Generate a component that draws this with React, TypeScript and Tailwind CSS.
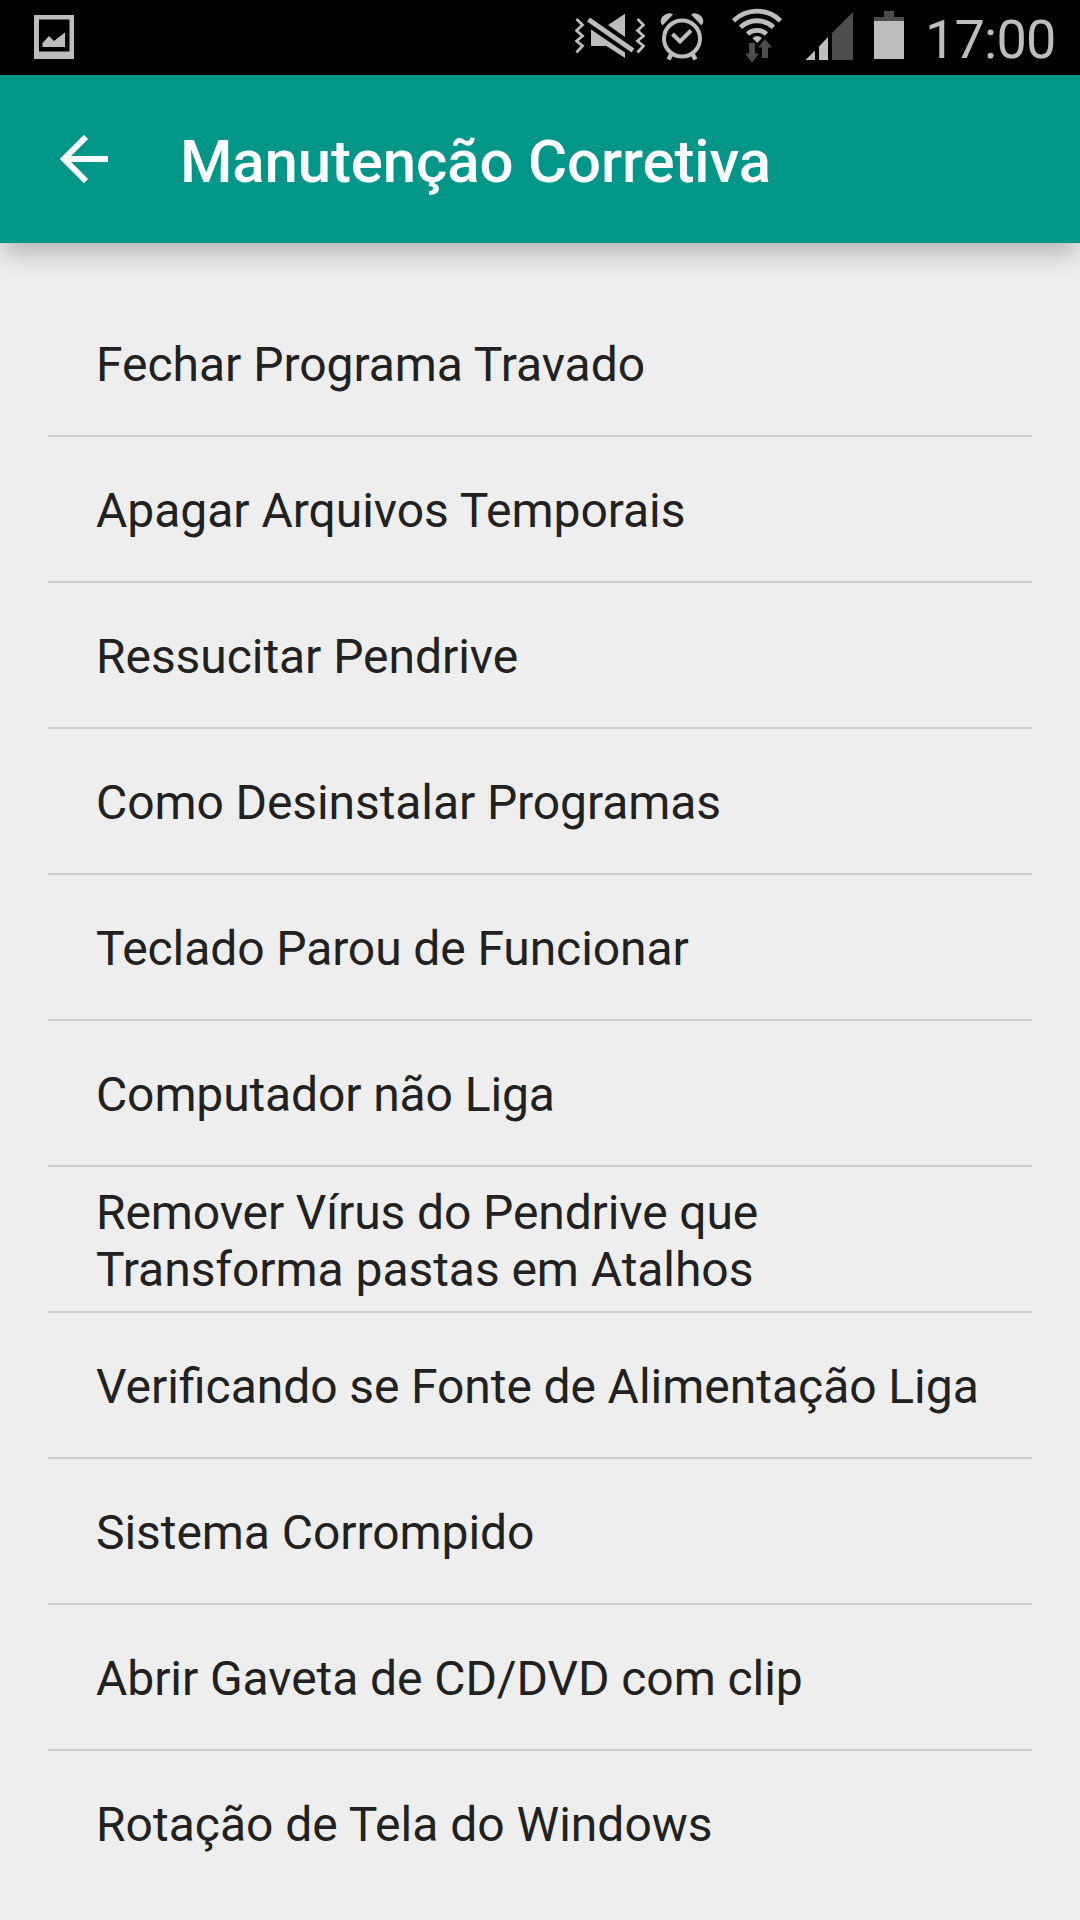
const items = [
  { lines: ['Fechar Programa Travado'], spacing: 'tracking-[-0.03px]' },
  { lines: ['Apagar Arquivos Temporais'], spacing: 'tracking-[-0.03px]' },
  { lines: ['Ressucitar Pendrive'], spacing: 'tracking-[-0.06px]' },
  { lines: ['Como Desinstalar Programas'], spacing: 'tracking-[-0.09px]' },
  { lines: ['Teclado Parou de Funcionar'], spacing: 'tracking-[-0.1px]' },
  { lines: ['Computador não Liga'], spacing: 'tracking-[-0.12px]' },
  { lines: ['Remover Vírus do Pendrive que', 'Transforma pastas em Atalhos'], spacing: 'tracking-[-0.11px] last:tracking-[-0.05px]' },
  { lines: ['Verificando se Fonte de Alimentação Liga'], spacing: '[word-spacing:-0.4px]' },
  { lines: ['Sistema Corrompido'], spacing: 'tracking-[-0.06px]' },
  { lines: ['Abrir Gaveta de CD/DVD com clip'], spacing: 'tracking-[-0.07px]' },
  { lines: ['Rotação de Tela do Windows'], spacing: 'tracking-normal' },
];

function PictureIcon() {
  return (
    <svg className="h-11 w-10" viewBox="0 0 40 44">
      <path fill="#bdbdbd" fillRule="evenodd" d="M0 0h40v44H0zM5 4.500v32h30.500v-32z" />
      <path fill="#bdbdbd" d="M8.500 32v-4l6.500-7 5 5 11-8.500V32z" />
    </svg>
  );
}

function MuteVibrateIcon() {
  return (
    <svg className="h-[46px] w-[70px]" viewBox="575 13 70 46">
      <g fill="none" stroke="#bdbdbd">
        <path strokeWidth="2.800" d="M576.500 19l6 6-6 5.500 6 5.500-6 5 6 5-6 6.500" />
        <path strokeWidth="2.800" d="M637.500 19l6 6-6 5.500 6 5.500-6 5 6 5-6 6.500" />
        <path strokeWidth="4.800" d="M588.500 19.500l44.500 31" />
      </g>
      <path fill="#bdbdbd" d="M608 25L625 13.800V37zM591 29.500L625 52.500V58L606.500 46H591z" />
    </svg>
  );
}

function AlarmIcon() {
  return (
    <svg className="h-[48px] w-11" viewBox="660 13 44 48">
      <g fill="none" stroke="#bdbdbd">
        <circle cx="682" cy="38.500" r="18" strokeWidth="4" />
        <path strokeWidth="4" d="M672.500 34l7.500 7.500 11-11" />
        <path strokeWidth="4.500" d="M671.500 54l-3 5.500M692.500 54l3 5.500" />
      </g>
      <path fill="#bdbdbd" d="M662.500 25.500q-4-5 .5-9.500 5-4.500 10-1.500zM701.500 25.500q4-5-.5-9.500-5-4.500-10-1.500z" />
    </svg>
  );
}

function WifiIcon() {
  return (
    <svg className="h-[54px] w-[50px]" viewBox="732 8 50 54">
      <g fill="none" stroke="#bdbdbd" strokeWidth="4.800">
        <path d="M733.500 20.800a33.500 33.500 0 0 1 47 0" />
        <path d="M740.500 27.200a24.300 24.300 0 0 1 33 0" />
        <path d="M747.500 34a14.500 14.500 0 0 1 19 0" />
      </g>
      <path fill="#bdbdbd" d="M752.500 38q4.500-4 9.500 0l-4.800 5z" />
      <path fill="#4d4d4d" d="M749 43h6v10.500h4L752 62.500l-7-9h4zM762 58V47.500h-4L765 39l7 8.500h-4V58z" />
    </svg>
  );
}

function SignalIcon() {
  return (
    <svg className="h-12 w-12" viewBox="805 12 48 48">
      <path fill="#bdbdbd" d="M805.500 60l9.500-9.500V60zM819 60V46.500l9-9.500v23z" />
      <path fill="#4d4d4d" d="M832 60V33l21-21v48z" />
    </svg>
  );
}

function BatteryIcon() {
  return (
    <svg className="h-12 w-[30px]" viewBox="874 11 30 48">
      <path fill="#4d4d4d" d="M884 11h10v6h10v4h-30v-4h10z" />
      <path fill="#bdbdbd" d="M874 21h30v38h-30z" />
    </svg>
  );
}

export default function App() {
  return (
    <div className="h-[1920px] w-[1080px] overflow-hidden bg-[#eeeeee] font-[Roboto,sans-serif]">
      <div className="flex h-[75px] items-start justify-between bg-black pr-[24px] pl-[34px]">
        <div className="pt-[15px]"><PictureIcon /></div>
        <div className="flex items-start">
          <div className="mr-[15px] pt-[13px]"><MuteVibrateIcon /></div>
          <div className="mr-[28px] pt-[13px]"><AlarmIcon /></div>
          <div className="mr-[23px] pt-2"><WifiIcon /></div>
          <div className="mr-[21px] pt-3"><SignalIcon /></div>
          <div className="mr-[21px] pt-[11px]"><BatteryIcon /></div>
          <span className="w-[131px] pt-2 text-[54px] leading-[64px] tracking-[-0.8px] whitespace-nowrap text-[#bdbdbd]">17:00</span>
        </div>
      </div>
      <header className="relative flex h-[168px] items-center bg-[#009688] pl-[60px] shadow-[0_14px_24px_-4px_rgba(0,0,0,0.25)]">
        <svg className="mr-[72px] h-12 w-12" viewBox="0 0 48 48" fill="none" stroke="white" strokeWidth="6">
          <path d="M48 24H6M26 2L4 24l22 22" />
        </svg>
        <h1 className="pt-[5px] text-[60px] font-medium tracking-[-0.15px] whitespace-nowrap text-white">Manutenção Corretiva</h1>
      </header>
      <ul className="mx-12 mt-[48px]">
        {items.map(({ lines, spacing }) => (
          <li key={lines[0]} className="flex h-[146px] flex-col justify-center border-b-2 border-[#cfcfcf] pt-[3px] pl-12 text-[48px] leading-[57px] whitespace-nowrap text-[#212121] last:border-transparent">
            {lines.map((line) => <span key={line} className={spacing}>{line}</span>)}
          </li>
        ))}
      </ul>
    </div>
  );
}
